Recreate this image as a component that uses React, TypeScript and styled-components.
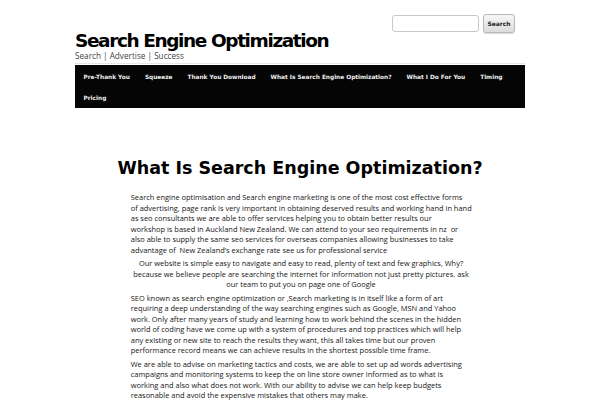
import React from 'react';
import styled, { createGlobalStyle } from 'styled-components';

const GlobalStyle = createGlobalStyle`
  html, body {
    margin: 0;
    padding: 0;
    background: #ffffff;
  }
  body {
    font-family: "DejaVu Sans", Verdana, sans-serif;
    color: #222;
  }
`;

const Page = styled.div`
  width: 450px;
  margin: 0 auto;
`;

const Header = styled.header`
  display: flex;
  justify-content: space-between;
  align-items: flex-start;
  height: 64px;
  border-bottom: 1px solid #e6e6e6;
  box-sizing: border-box;
`;

const Branding = styled.div`
  display: flex;
  flex-direction: column;
  padding-top: 32px;
`;

const SiteTitle = styled.h1`
  margin: 0;
  font-family: "DejaVu Sans", Verdana, sans-serif;
  font-weight: bold;
  font-size: 18.5px;
  letter-spacing: -1.4px;
  line-height: 18px;
  color: #000;
`;

const Tagline = styled.div`
  margin-top: 1px;
  font-family: "Open Sans", "DejaVu Sans", sans-serif;
  font-size: 8.2px;
  line-height: 9px;
  color: #444;
`;

const SearchForm = styled.form`
  display: flex;
  align-items: center;
  gap: 4px;
  padding-top: 14px;
  margin-right: 10px;
`;

const SearchInput = styled.input`
  width: 87px;
  height: 17px;
  box-sizing: border-box;
  border: 1px solid #c8c8c8;
  border-radius: 3px;
  background: #fff;
  padding: 0 4px;
  font-size: 7px;
`;

const SearchButton = styled.button`
  width: 32px;
  height: 19px;
  box-sizing: border-box;
  border: 1px solid #b8b8b8;
  border-radius: 3px;
  background: linear-gradient(#f7f7f7, #dcdcdc);
  font-family: "DejaVu Sans", sans-serif;
  font-weight: bold;
  font-size: 6px;
  color: #222;
  padding: 0;
  box-shadow: 0 1px 1px rgba(0, 0, 0, 0.15);
`;

const Nav = styled.nav`
  display: flex;
  flex-wrap: wrap;
  align-content: flex-start;
  background: #050505;
  margin-top: 1px;
  padding: 1.5px 0 0 1px;
  height: 43px;
  box-sizing: border-box;
`;

const NavItem = styled.a`
  display: block;
  padding: 0 7.5px;
  height: 21px;
  line-height: 21px;
  font-family: "DejaVu Sans", Verdana, sans-serif;
  font-weight: bold;
  font-size: 5.8px;
  color: #f0f0f0;
  text-decoration: none;
  white-space: nowrap;

  &:visited {
    color: #f0f0f0;
  }
`;

const Content = styled.main`
  display: flex;
  flex-direction: column;
  align-items: center;
  padding-top: 48px;
`;

const Heading = styled.h2`
  margin: 0 0 12px;
  font-family: "DejaVu Sans", Verdana, sans-serif;
  font-weight: bold;
  font-size: 17.5px;
  line-height: 24px;
  color: #000;
  text-align: center;
`;

const Body = styled.div`
  width: 340.5px;
  padding-left: 2px;
`;

const Paragraph = styled.p<{ $center?: boolean; $nowrap?: boolean }>`
  margin: 0 0 3px;
  font-family: "Open Sans", "DejaVu Sans", sans-serif;
  font-size: 7.45px;
  line-height: 10.5px;
  color: #161616;
  text-align: ${({ $center }) => ($center ? 'center' : 'left')};
  white-space: ${({ $nowrap }) => ($nowrap ? 'nowrap' : 'normal')};
`;

const navLinks = [
  'Pre-Thank You',
  'Squeeze',
  'Thank You Download',
  'What Is Search Engine Optimization?',
  'What I Do For You',
  'Timing',
  'Pricing',
];

// the intro paragraph keeps the hard breaks of the original copy
const introLines = [
  'Search engine optimisation and Search engine marketing is one of the most cost effective forms',
  'of advertising, page rank is very important in obtaining deserved results and working hand in hand',
  'as seo consultants we are able to offer services helping you to obtain better results our',
  'workshop is based in Auckland New Zealand. We can attend to your seo requirements in nz\u00a0 or',
  'also able to supply the same seo services for overseas companies allowing businesses to take',
  'advantage of\u00a0 New Zealand’s exchange rate see us for professional service',
];

export default function App() {
  return (
    <>
      <GlobalStyle />
      <Page>
        <Header>
          <Branding>
            <SiteTitle>Search Engine Optimization</SiteTitle>
            <Tagline>Search | Advertise | Success</Tagline>
          </Branding>
          <SearchForm onSubmit={(e) => e.preventDefault()}>
            <SearchInput type="text" />
            <SearchButton type="submit">Search</SearchButton>
          </SearchForm>
        </Header>
        <Nav>
          {navLinks.map((label) => (
            <NavItem key={label} href="#">
              {label}
            </NavItem>
          ))}
        </Nav>
        <Content>
          <Heading>What Is Search Engine Optimization?</Heading>
          <Body>
            <Paragraph $nowrap>
              {introLines.map((line, i) => (
                <React.Fragment key={i}>
                  {i > 0 && <br />}
                  {line}
                </React.Fragment>
              ))}
            </Paragraph>
            <Paragraph $center>
              Our website is simple easy to navigate and easy to read, plenty of text and few graphics, Why? because we
              believe people are searching the internet for information not just pretty pictures. ask our team to put
              you on page one of Google
            </Paragraph>
            <Paragraph>
              SEO known as search engine optimization or ,Search marketing is in itself like a form of art requiring a
              deep understanding of the way searching engines such as Google, MSN and Yahoo work. Only after many years
              of study and learning how to work behind the scenes in the hidden world of coding have we come up with a
              system of procedures and top practices which will help any existing or new site to reach the results they
              want, this all takes time but our proven performance record means we can achieve results in the shortest
              possible time frame.
            </Paragraph>
            <Paragraph>
              We are able to advise on marketing tactics and costs, we are able to set up ad words advertising campaigns
              and monitoring systems to keep the on line store owner informed as to what is working and also what does
              not work. With our ability to advise we can help keep budgets reasonable and avoid the expensive mistakes
              that others may make.
            </Paragraph>
          </Body>
        </Content>
      </Page>
    </>
  );
}
